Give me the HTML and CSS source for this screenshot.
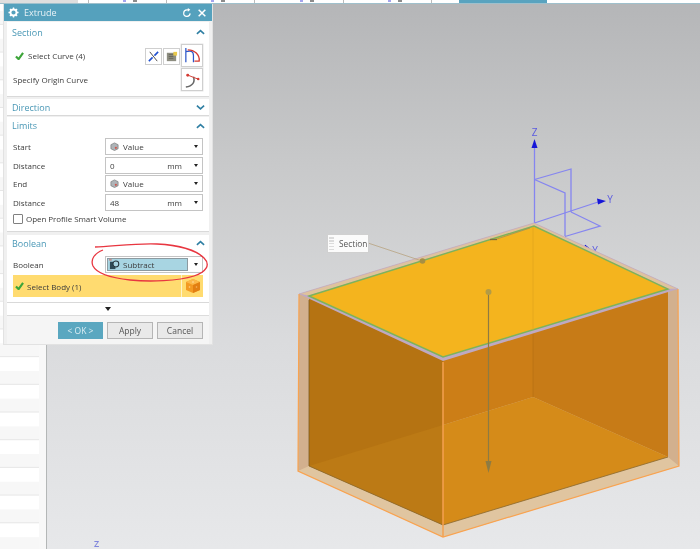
FILE: index.html
```html
<!DOCTYPE html>
<html lang="en">
<head>
<meta charset="utf-8">
<title>Extrude</title>
<link rel="stylesheet" href="styles.css">
</head>
<body>
<div class="app">
  <div class="topbar">
    <span class="top-left"></span>
    <span class="top-cell"></span><span class="top-cell"></span><span class="top-cell"></span><span class="top-cell top-cell-last"></span>
    <span class="tab"></span>
  </div>
  <div class="workspace">
    <div class="sidelist"></div>
    <div class="viewport"><span class="triad-z">Z</span></div>
  </div>

  <svg class="scene" viewBox="0 0 700 549" aria-hidden="true">
    <!-- triad behind the body -->
    <g fill="none" stroke="#8585f0" stroke-width="1.300">
      <path d="M534.500 224V146"/>
      <path d="M534.500 179.500L571 169V212"/>
      <path d="M534.500 179.500L565 193V236"/>
      <path d="M534.500 223L598 202"/>
      <path d="M571 212L600 226L565 236.500"/>
    </g>
    <path d="M534.500 139L537.500 148H531.500Z" fill="#1616d8"/>
    <path d="M606 201L597 198.500L598 204.500Z" fill="#1616d8"/>
    <path d="M591 250L585 245L587 249Z" fill="#1616d8" stroke="#1616d8"/>
    <text x="534.500" y="136" class="axis">Z</text>
    <text x="610" y="203" class="axis">Y</text>
    <text x="595" y="254" class="axis">Y</text>

    <!-- shell -->
    <path d="M299 294L534 223L678 289L679 466L443 537L298 471Z" fill="#d2b08e"/>
    <path d="M298 471L309 466L443 525L668 457L679 466L443 537Z" fill="#e0c5a0"/>
    <!-- cavity -->
    <path d="M309 296L443 358V525L309 466Z" fill="#b57312"/>
    <path d="M443 358L533 330V397L443 425Z" fill="#cc7e17"/>
    <path d="M533 226L668 289V457L533 397Z" fill="#c77b17"/>
    <path d="M309 466L443 425V525Z" fill="#bc7a15"/>
    <path d="M443 425L533 397L668 457L443 525Z" fill="#d58b19"/>
    <path d="M309 466L443 525L668 457" fill="none" stroke="#8a6a30" stroke-width=".8"/>
    <path d="M309 300V466" stroke="#7a5a22" stroke-width=".8"/>
    <path d="M533 330V397" stroke="#b87214" stroke-width=".8"/>
    <!-- top -->
    <path d="M299 294L534 223L678 289L668 289L534 226L309 296Z" fill="#dfc39c" stroke="#c3abc4" stroke-width=".8"/>
    <path d="M299 294L309 296L443 357L668 289L678 289L443 361Z" fill="#bfa9c2"/>
    <path d="M309 296L534 226L668 289L443 357Z" fill="#f4b41e" stroke="#7cb35c" stroke-width="1.400"/>
    <path d="M533 227V330" stroke="#e2a61c" stroke-width=".8"/>
    <path d="M299 294L298 471L443 537L679 466L678 289" fill="none" stroke="#f9a350" stroke-width="1.200"/>
    <path d="M443 362V537" stroke="#f4a050" stroke-width="1.500"/>
    <!-- direction arrow and section markers -->
    <path d="M488.500 292V466" stroke="#8e7b42" stroke-width="1.200"/>
    <path d="M488.500 473L485.500 461H491.500Z" fill="#8e7b42"/>
    <circle cx="488.500" cy="292" r="3" fill="#b39b45"/>
    <path d="M368 243L422 261" stroke="#b8a382" stroke-width=".8"/>
    <circle cx="422.500" cy="261" r="2.800" fill="#a58f45"/>
    <path d="M490 239.500L497 239.500" stroke="#7d6d40" stroke-width="1.300"/>
    <path d="M497 239L530 228" stroke="#a3905a" stroke-width=".8"/>
  </svg>

  <div class="tag">
    <span class="tag-grip"></span>
    <span>Section</span>
  </div>

  <section class="dialog" aria-label="Extrude">
    <header class="titlebar">
      <svg class="gear" viewBox="0 0 12 12"><circle cx="6" cy="6" r="3.300" fill="none" stroke="#fff" stroke-width="2"/><path d="M6 .5v2M6 9.500v2M.5 6h2M9.500 6h2M2.100 2.100l1.400 1.400M8.500 8.500l1.400 1.400M2.100 9.900l1.400-1.400M8.500 3.500l1.400-1.400" stroke="#fff" stroke-width="1.500"/></svg>
      <span class="title">Extrude</span>
      <svg class="reset" viewBox="0 0 12 12"><path d="M9.800 6.500A3.900 3.900 0 1 1 6 2.200H8" fill="none" stroke="#fff" stroke-width="1.400"/><path d="M7 0L10 2.200L7 4.400Z" fill="#fff"/></svg>
      <svg class="close" viewBox="0 0 12 12"><path d="M2 2L10 10M10 2L2 10" stroke="#fff" stroke-width="1.800"/></svg>
    </header>

    <div class="panel panel-section">
      <div class="panel-head"><span>Section</span><svg class="chev" viewBox="0 0 10 6"><path d="M1 5L5 1.500L9 5" fill="none" stroke="#2f7fa3" stroke-width="1.800"/></svg></div>
      <div class="pick-row">
        <svg class="check" viewBox="0 0 10 9"><path d="M1 5L4 8L9 1" fill="none" stroke="#3da53a" stroke-width="2.400"/></svg>
        <span class="grow">Select Curve (4)</span>
        <span class="tool tool-sm"><svg viewBox="0 0 14 14"><path d="M3 2L11 12" stroke="#444" stroke-width="1"/><path d="M2 12L6 8M8 6L12 2" stroke="#1f4fd0" stroke-width="1.700"/></svg></span>
        <span class="tool tool-sm"><svg viewBox="0 0 14 14"><rect x="2" y="3" width="10" height="9" fill="#8d8d80"/><path d="M4 5h5M4 7h5M4 9h5" stroke="#5c5c52" stroke-width=".8"/><path d="M9 2h4v4H9z" fill="#e8c94a"/></svg></span>
        <span class="tool tool-lg"><svg viewBox="0 0 20 20"><path d="M3 2V17M3 6C8 5 11 5 11 10V17" fill="none" stroke="#2b55c8" stroke-width="1.300"/><path d="M5 4C12 4 18 9 17 16H12" fill="none" stroke="#d43a32" stroke-width="1.400"/></svg></span>
      </div>
      <div class="pick-row pick-row-2">
        <span class="grow label-inset">Specify Origin Curve</span>
        <span class="tool tool-lg"><svg viewBox="0 0 20 20"><path d="M3 18C10 17 13 13 11 7" fill="none" stroke="#666" stroke-width="1.600"/><path d="M4 5L17 10" stroke="#d43a32" stroke-width="1"/><circle cx="5" cy="5.500" r="1.500" fill="#d43a32"/><circle cx="16" cy="9.500" r="1.300" fill="#d43a32"/></svg></span>
      </div>
    </div>

    <div class="panel panel-direction">
      <div class="panel-head"><span>Direction</span><svg class="chev" viewBox="0 0 10 6"><path d="M1 1.500L5 5L9 1.500" fill="none" stroke="#2f7fa3" stroke-width="1.800"/></svg></div>
    </div>

    <div class="panel panel-limits">
      <div class="panel-head"><span>Limits</span><svg class="chev" viewBox="0 0 10 6"><path d="M1 5L5 1.500L9 5" fill="none" stroke="#2f7fa3" stroke-width="1.800"/></svg></div>
      <div class="form-row"><span class="form-label">Start</span><span class="field"><svg class="cube-mini" viewBox="0 0 10 10"><path d="M5 1L9 3V7.500L5 9.500L1 7.500V3Z" fill="#aeb4b8" stroke="#707070" stroke-width=".7"/><circle cx="6.500" cy="6.500" r="1.200" fill="#d0574d"/></svg><span class="grow">Value</span><i class="caret"></i></span></div>
      <div class="form-row"><span class="form-label">Distance</span><span class="field"><span class="num">0</span><span class="unit">mm</span><i class="caret"></i></span></div>
      <div class="form-row"><span class="form-label">End</span><span class="field"><svg class="cube-mini" viewBox="0 0 10 10"><path d="M5 1L9 3V7.500L5 9.500L1 7.500V3Z" fill="#aeb4b8" stroke="#707070" stroke-width=".7"/><circle cx="6.500" cy="6.500" r="1.200" fill="#d0574d"/></svg><span class="grow">Value</span><i class="caret"></i></span></div>
      <div class="form-row"><span class="form-label">Distance</span><span class="field"><span class="num">48</span><span class="unit">mm</span><i class="caret"></i></span></div>
      <label class="check-row"><span class="box"></span><span>Open Profile Smart Volume</span></label>
    </div>

    <div class="panel panel-boolean">
      <div class="panel-head"><span>Boolean</span><svg class="chev" viewBox="0 0 10 6"><path d="M1 5L5 1.500L9 5" fill="none" stroke="#2f7fa3" stroke-width="1.800"/></svg></div>
      <div class="form-row"><span class="form-label">Boolean</span><span class="field field-active"><span class="active-fill"><svg class="sub-icon" viewBox="0 0 12 12"><rect x="1" y="3" width="6" height="8" fill="#2f4a55"/><circle cx="7.500" cy="5.500" r="3.200" fill="#a9d5e2" stroke="#26343a" stroke-width="1.100"/><path d="M0 1h3" stroke="#d0574d" stroke-width="1"/></svg>Subtract</span><i class="caret"></i></span></div>
      <div class="body-row">
        <span class="body-main"><svg class="check" viewBox="0 0 10 9"><path d="M1 5L4 8L9 1" fill="none" stroke="#3da53a" stroke-width="2.400"/></svg>Select Body (1)</span>
        <span class="body-icon"><svg viewBox="0 0 16 16"><path d="M8 1L15 4V12L8 15L1 12V4Z" fill="#f39a22"/><path d="M1 4L8 7L15 4L8 1Z" fill="#fbb84a"/><path d="M8 7V15L15 12V4Z" fill="#e27f12"/><circle cx="4.500" cy="9" r=".8" fill="#ffd28a"/><circle cx="11.500" cy="9" r=".8" fill="#f7b565"/><circle cx="8" cy="4" r=".8" fill="#ffe0a8"/></svg></span>
      </div>
    </div>

    <div class="more"><i class="more-caret"></i></div>
    <footer class="actions">
      <button class="btn btn-primary">&lt; OK &gt;</button>
      <button class="btn">Apply</button>
      <button class="btn">Cancel</button>
    </footer>
  </section>

  <svg class="markup" viewBox="0 0 700 549" aria-hidden="true">
    <path d="M95 247C115 246 140 243 157 244C178 245 196 250 204 258C211 265 206 272 194 276C178 281 150 282 130 280C112 278 97 274 93 266C90 259 95 253 103 250" fill="none" stroke="#e83640" stroke-width="1.300"/>
  </svg>
</div>
</body>
</html>
```
FILE: styles.css
```css
* { box-sizing: border-box; }
html, body { margin: 0; height: 100%; }
body { font-family: "Open Sans", "Noto Sans", sans-serif; color: #3c3c3c; overflow: hidden; }

.app { position: relative; width: 700px; height: 549px; display: flex; flex-direction: column; background: #fff; overflow: hidden; filter: blur(.45px); }

.topbar { height: 4px; flex: none; display: flex; background: #fff; border-bottom: 1px solid #9fc0cc; }
.top-left { width: 123px; flex: none; background: linear-gradient(to right, #dedede 0, #dedede 78px, #fff 78px, #fff 88px, #bbb 88px, #bbb 89px, #fff 89px); }
.top-cell { width: 88.300px; flex: none; background:
  linear-gradient(#a4a4ee, #a4a4ee) 0 0 / 3px 2px no-repeat,
  linear-gradient(#8c8c8c, #8c8c8c) 10px 0 / 4px 2px no-repeat,
  linear-gradient(#bbb, #bbb) 43px 0 / 1px 3px no-repeat; }
.top-cell-last { width: 71px; }
.tab { width: 88px; flex: none; background: #59a3bf; }

.workspace { flex: 1; display: flex; min-height: 0; }
.sidelist {
  width: 46px; flex: none; border-right: 7px solid #f8f8f8;
  background: linear-gradient(to bottom, #fff 0, #fff 13.400px, #e6e6e6 13.400px, #e6e6e6 14px, #f7f7f7 14px, #f7f7f7 27.100px, #e6e6e6 27.100px) 0 20.900px / 100% 27.700px;
}
.viewport { flex: 1; position: relative; border-left: 1.500px solid #b4b7b7; background: linear-gradient(to bottom, #b5b6b8 0, #c8c9ca 160px, #dadbdd 336px, #e7e8ea 100%); }
.triad-z { position: absolute; left: 47px; bottom: 0; font-size: 9px; line-height: 10px; font-weight: 600; color: #8086dc; }

.scene, .markup { position: absolute; left: 0; top: 0; width: 700px; height: 549px; pointer-events: none; }
.axis { font: 10px "Open Sans", sans-serif; fill: #5b5be0; text-anchor: middle; }

.tag { position: absolute; left: 327px; top: 234px; width: 42px; height: 19px; display: flex; align-items: center; gap: 5px; padding-left: 1px; background: #fbfbfb; border: 1px solid #d0d0d0; font-size: 8.300px; color: #555; white-space: nowrap; }
.tag-grip { width: 5px; height: 13px; flex: none; background: repeating-linear-gradient(to bottom, #dcdcdc 0, #dcdcdc 1.500px, transparent 1.500px, transparent 3px); }

.dialog { position: absolute; left: 3px; top: 4px; width: 210px; height: 341px; display: flex; flex-direction: column; background: #f0f0f0; padding: 0 3px; border: 1px solid #e2e2e2; border-top: 0; font-size: 8px; }
.titlebar { height: 17px; margin: 0 -3px; flex: none; display: flex; align-items: center; padding: 0 4px; background: #55a1bd; color: #e8f2f6; }
.gear { width: 11px; height: 11px; margin-right: 5px; }
.title { flex: 1; font-size: 9px; }
.reset { width: 10px; height: 10px; margin-right: 5px; }
.close { width: 10px; height: 10px; margin-right: 1px; }

.panel { background: #fff; flex: none; padding: 0 6px; border-bottom: 1px solid #d9d9d9; }
.panel-section { height: 75px; margin: 1px 0 2px; }
.panel-direction { height: 17px; margin-bottom: 1px; }
.panel-limits { height: 115px; margin-bottom: 3px; }
.panel-boolean { height: 68px; }
.panel-head { height: 20px; display: flex; align-items: center; justify-content: space-between; font-size: 9px; color: #4a98b6; margin-left: -1px; }
.panel-direction .panel-head { height: 16px; }
.panel-limits .panel-head { height: 20.500px; padding-bottom: 3px; }
.panel-boolean .panel-head { height: 20px; padding-bottom: 4px; }
.chev { width: 9px; height: 6px; margin-right: -2px; }

.pick-row { display: flex; align-items: center; gap: 1px; height: 23px; margin-top: 2px; padding-left: 2px; }
.pick-row-2 { margin-top: 1px; }
.check { width: 9px; height: 8px; flex: none; margin-right: 3px; }
.grow { flex: 1; }
.label-inset { margin-left: -2px; }
.tool { display: flex; align-items: center; justify-content: center; background: #fff; border: 1px solid #cfcfcf; flex: none; }
.tool-sm { width: 17px; height: 17px; margin-top: 1px; }
.tool-sm svg { width: 13px; height: 13px; }
.tool-lg { width: 22px; height: 23px; box-shadow: 0 0 0 .5px #e6e6e6; }
.tool-lg svg { width: 19px; height: 19px; }

.form-row { display: flex; align-items: center; height: 18.500px; }
.form-label { width: 92px; flex: none; }
.field { flex: 1; height: 17px; display: flex; align-items: center; padding: 0 4px; background: #fff; border: 1px solid #c4c4c4; }
.cube-mini { width: 9px; height: 9px; margin-right: 4px; }
.num { flex: 1; }
.unit { margin-right: 11px; font-size: 8px; }
.caret { width: 0; height: 0; flex: none; border: 2.500px solid transparent; border-top: 3px solid #222; border-bottom: 0; margin-left: 1px; }
.check-row { display: flex; align-items: center; gap: 3px; height: 14px; letter-spacing: -.05px; }
.box { width: 10px; height: 10px; border: 1px solid #808080; border-radius: 1px; background: #fff; }

.panel-boolean .form-row { height: 19px; }
.field-active { padding: 1px 4px 1px 1px; }
.active-fill { flex: 1; height: 100%; display: flex; align-items: center; margin-right: 5px; padding-left: 1px; background: #a8d5e2; border: 1px solid #8c9aa0; }
.sub-icon { width: 11px; height: 11px; margin-right: 3px; }
.body-row { display: flex; height: 22px; margin-top: 1px; background: #ffdb70; }
.body-main { flex: 1; display: flex; align-items: center; padding-left: 2px; }
.body-icon { width: 22px; flex: none; display: flex; align-items: center; justify-content: center; border-left: 1px solid #fff3c9; }
.body-icon svg { width: 16px; height: 16px; }

.more { height: 13px; flex: none; display: flex; align-items: center; justify-content: center; background: #fff; border-bottom: 1px solid #dcdcdc; }
.more-caret { width: 0; height: 0; border: 3.500px solid transparent; border-top: 4px solid #222; border-bottom: 0; }
.actions { flex: 1; display: flex; justify-content: flex-end; align-items: flex-start; gap: 4px; padding: 6px 6px 0 0; background: #f5f5f5; }
.btn { width: 46px; height: 17px; padding: 0; font: 8.500px "Open Sans", sans-serif; color: #555; background: #e9e9e9; border: 1px solid #b5b5b5; }
.btn-primary { width: 45px; background: #5aa7c0; border-color: #5aa7c0; color: #dbeef4; }
```
